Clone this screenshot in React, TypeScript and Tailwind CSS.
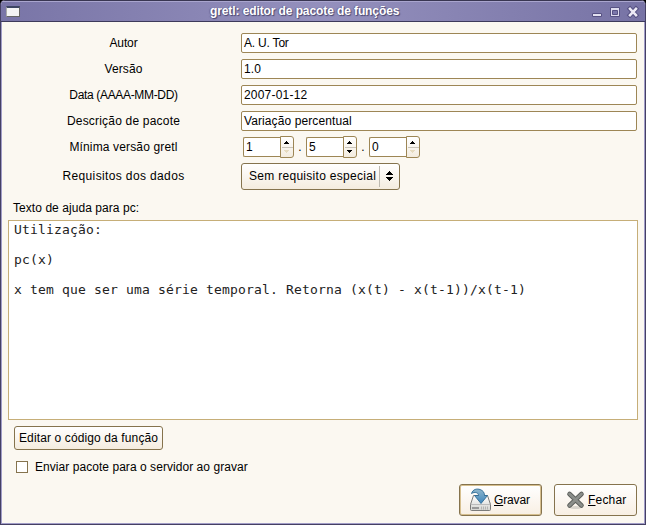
import type { ReactNode } from "react";

function Label({ children, className }: { children: ReactNode; className: string }) {
  return (
    <div className="flex w-[231px] mr-px shrink-0 justify-center">
      <span className={className}>{children}</span>
    </div>
  );
}

function Field({ label, labelClass, value, valueClass }: { label: string; labelClass: string; value: string; valueClass: string }) {
  return (
    <div className="flex h-[20px] items-center">
      <Label className={labelClass}>{label}</Label>
      <div className="ml-px flex h-[20px] w-[396px] items-center rounded-[2px] border border-[#9d8655] bg-white pl-[2px]">
        <span className={valueClass}>{value}</span>
      </div>
    </div>
  );
}

function Spin({ value, lowest }: { value: string; lowest?: boolean }) {
  return (
    <div className="flex h-[22px] w-[51px] items-center">
      <div className="flex h-[20px] w-[37px] items-center rounded-l-[2px] border border-r-0 border-[#9d8655] bg-white pl-[2px]">{value}</div>
      <div className="h-[22px] w-[14px] rounded-r-[3px] border border-[#9d8655] bg-gradient-to-b from-white to-[#f3ecdf]">
        <svg width="12" height="20" viewBox="0 0 12 20" shapeRendering="crispEdges">
          <path d="M5 4h1v1h1v1h1v1H3V6h1V5h1z" fill="#000" />
          <path d="M1 10h11v1H1z" fill="#c9c4ba" />
          <path d="M3 13h5v1H7v1H6v1H5v-1H4v-1H3z" fill={lowest ? "#e6dbc0" : "#000"} />
        </svg>
      </div>
    </div>
  );
}

function SaveIcon() {
  return (
    <svg width="24" height="24" viewBox="0 0 24 24">
      <defs>
        <linearGradient id="disk" x2="0" y2="1">
          <stop stopColor="#fff" />
          <stop offset="1" stopColor="#d4d4d0" />
        </linearGradient>
        <linearGradient id="arrow" x2="0" y2="1">
          <stop stopColor="#8fb6cb" />
          <stop offset="1" stopColor="#3f86bd" />
        </linearGradient>
      </defs>
      <path d="M4.500 7.500h14l3 9v5q0 1-1 1h-18q-1 0-1-1v-5z" fill="url(#disk)" stroke="#7b7b79" />
      <path d="M2 16.500h19" stroke="#bbb" />
      <path d="M3 20h7" stroke="#999" strokeWidth="2" />
      <path d="M12.500 18.500v3M14.500 18.500v3M16.500 18.500v3M18.500 18.500v3" stroke="#aaa" strokeWidth=".8" />
      <path d="M2.500 5.500C4 1 8 .5 11 1.500c3 1 4.500 3 4.500 6H18.500L12 15.500 5.500 7.500H9.500C9.500 4.500 6 3.500 2.500 5.500z" fill="url(#arrow)" stroke="#2c6a94" strokeWidth=".9" />
    </svg>
  );
}

function CloseIcon() {
  return (
    <svg width="20" height="20" viewBox="0 0 20 20">
      <ellipse cx="9.500" cy="17.500" rx="5.500" ry="1.500" fill="#d8d4cc" />
      <path d="M3.500 4l12 11.500M15.500 4l-12 11.500" stroke="#5c5f5b" strokeWidth="4.600" strokeLinecap="round" />
      <path d="M3.500 4l12 11.500M15.500 4l-12 11.500" stroke="#8b8e8a" strokeWidth="2.800" strokeLinecap="round" />
    </svg>
  );
}

function TitleBar() {
  return (
    <div className="flex h-[22px] items-center border-t border-b border-t-[#393652] border-b-[#3d3a5b] bg-[linear-gradient(90deg,#7975a7,#9490bd_50%,#7773a5)] shadow-[inset_0_1px_0_#a9a5ce]">
      <div className="ml-[5px] h-[11px] w-[14px] border border-t-2 border-[#aaa] border-t-[#3d4563] border-r-[#666] border-b-[#666] bg-[#f4f4f4]" />
      <span className="ml-[190px] text-[12px] font-bold tracking-[-0.100px] whitespace-nowrap text-white [text-shadow:1px_1px_1px_#49456e,-1px_0_1px_#68648f]">
        gretl: editor de pacote de funções
      </span>
      <svg className="mr-[5px] ml-auto" width="50" height="14" viewBox="0 0 50 14">
        <path d="M2.500 9.500h9v3h-9z" fill="#e3e1f1" stroke="#565183" />
        <path d="M20.500 3.500h9v9h-9z" fill="#dddbed" stroke="#565183" />
        <path d="M22.500 6.500h5v4h-5z" fill="#7b77aa" stroke="#565183" />
        <path d="M40 4.800l6 6.400M46 4.800l-6 6.400" stroke="#565183" strokeWidth="4.600" strokeLinecap="square" />
        <path d="M40 4.800l6 6.400M46 4.800l-6 6.400" stroke="#eceaf6" strokeWidth="2.500" strokeLinecap="square" />
      </svg>
    </div>
  );
}

export default function App() {
  return (
    <div className="h-[525px] w-[646px] bg-black">
      <div className="flex h-[525px] w-[646px] flex-col overflow-hidden rounded-t-[5px] border border-t-0 border-[#454064] bg-[#fbf8f1] font-['Liberation_Sans',Arial,sans-serif] text-[12px] leading-[15px] whitespace-nowrap text-black">
        <TitleBar />
        <div className="flex flex-1 flex-col border border-t-0 border-[#a19dc8] px-[6px] pt-[11px]">
          <div className="flex flex-col gap-[6px]">
            <Field label="Autor" labelClass="tracking-[-0.1px]" value="A. U. Tor" valueClass="tracking-[-0.2px]" />
            <Field label="Versão" labelClass="tracking-[0.1px]" value="1.0" valueClass="tracking-[0.1px]" />
            <Field label="Data (AAAA-MM-DD)" labelClass="tracking-[-0.33px]" value="2007-01-12" valueClass="tracking-[0.2px]" />
            <Field label="Descrição de pacote" labelClass="tracking-[0.2px]" value="Variação percentual" valueClass="tracking-[0.1px]" />
          </div>
          <div className="mt-[5px] flex h-[22px] items-center">
            <Label className="tracking-[0.15px]">Mínima versão gretl</Label>
            <div className="ml-[3px] flex items-center">
              <Spin value="1" lowest />
              <span className="w-[12px] text-center">.</span>
              <Spin value="5" />
              <span className="w-[12px] text-center">.</span>
              <Spin value="0" lowest />
            </div>
          </div>
          <div className="mt-[5px] flex h-[27px] items-center">
            <Label className="tracking-[0.37px]">Requisitos dos dados</Label>
            <div className="ml-px flex h-[27px] w-[159px] items-center rounded-[3px] border border-[#85734d] bg-gradient-to-b from-white to-[#f4ecdf] pl-[7px]">
              <span className="w-[130px] tracking-[0.29px]">Sem requisito especial</span>
              <div className="h-[21px] w-px bg-[#bdb9b0]" />
              <svg className="ml-[6px]" width="8" height="13" viewBox="0 0 8 13" shapeRendering="crispEdges">
                <path d="M3 1h1v1h1v1h1v1h1v1H0V4h1V3h1V2h1zM0 7h7v1H6v1H5v1H4v1H3v-1H2v-1H1V8H0z" />
              </svg>
            </div>
          </div>
          <div className="mt-[11px] ml-[5px] h-[15px] tracking-[0.06px]">Texto de ajuda para pc:</div>
          <pre className="mt-[4px] h-[200px] w-[630px] border border-[#c6ae78] bg-white pt-[1px] pl-[5px] font-['DejaVu_Sans_Mono',monospace] text-[13px] leading-[15px] tracking-[0.173px] text-[#222]">
            {"Utilização:\n\npc(x)\n\nx tem que ser uma série temporal. Retorna (x(t) - x(t-1))/x(t-1)"}
          </pre>
          <div className="mt-[6px] ml-[6px] flex h-[24px] w-[149px] items-center rounded-[3px] border border-[#85734d] bg-gradient-to-b from-white to-[#f4ecdf] pl-[4px]">
            <span className="tracking-[0.12px]">Editar o código da função</span>
          </div>
          <div className="mt-[9px] ml-[8px] flex h-[17px] items-center">
            <div className="-mt-px h-[12px] w-[12px] border border-[#85734d] bg-white" />
            <span className="ml-[7px] tracking-[0.05px]">Enviar pacote para o servidor ao gravar</span>
          </div>
          <div className="mt-[8px] mr-px flex justify-end gap-[12px]">
            <div className="flex h-[32px] w-[83px] items-center rounded-[3px] border border-[#85734d] bg-gradient-to-b from-white to-[#f8efe3] pl-[9px] shadow-[inset_0_0_0_1px_#d6bf8e]">
              <SaveIcon />
              <span className="ml-px tracking-[-0.15px]"><u>G</u>ravar</span>
            </div>
            <div className="flex h-[32px] w-[83px] items-center rounded-[3px] border border-[#85734d] bg-gradient-to-b from-white to-[#f8efe3] pl-[11px]">
              <CloseIcon />
              <span className="ml-[2px] tracking-[0.2px]"><u>F</u>echar</span>
            </div>
          </div>
        </div>
      </div>
    </div>
  );
}
